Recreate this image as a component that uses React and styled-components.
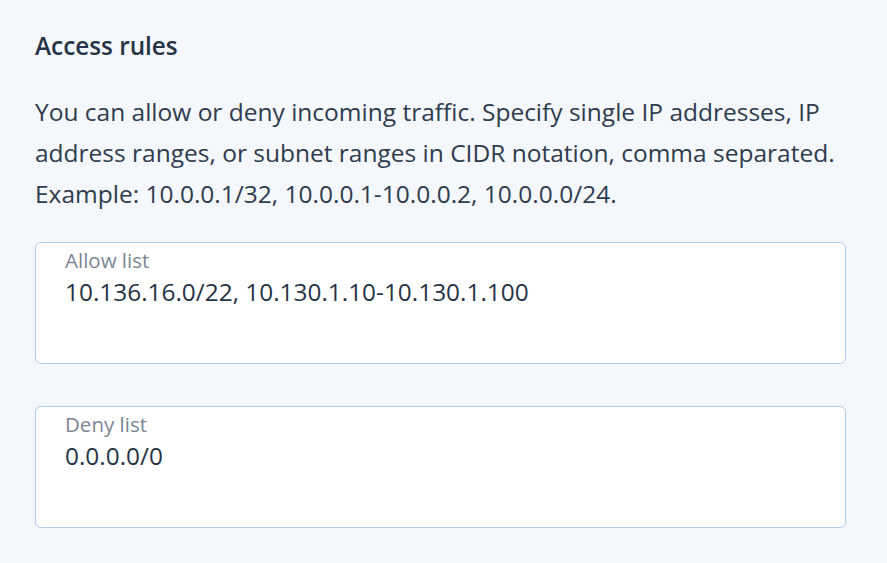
import styled, { createGlobalStyle } from 'styled-components';

const GlobalStyle = createGlobalStyle`
  html, body {
    margin: 0;
    padding: 0;
    background: #f4f7fb;
  }
  body {
    font-family: "Open Sans", "Noto Sans", sans-serif;
    color: #263446;
  }
`;

const Section = styled.section`
  padding: 26px 41px 0 35px;
  display: flex;
  flex-direction: column;
`;

const Title = styled.h2`
  margin: 0;
  font-size: 24.3px;
  font-weight: 550;
  line-height: 40px;
  color: #263446;
`;

const Description = styled.p`
  margin: 25px 0 0;
  font-size: 24.5px;
  line-height: 41px;
  color: #2f3c4e;
`;

const Fields = styled.div`
  display: flex;
  flex-direction: column;
  gap: 42px;
  margin-top: 28px;
`;

const Field = styled.label`
  display: flex;
  flex-direction: column;
  height: 122px;
  box-sizing: border-box;
  padding: 4px 29px 0;
  background: #ffffff;
  border: 1px solid #b0cbec;
  border-radius: 6px;
`;

const Label = styled.span`
  font-size: 20.5px;
  line-height: 26px;
  color: #7b8594;
`;

const Value = styled.textarea`
  flex: 1;
  border: none;
  outline: none;
  resize: none;
  padding: 0;
  margin: 0;
  background: transparent;
  font-family: inherit;
  font-size: 24.4px;
  line-height: 38px;
  color: #263446;
`;

const fields = [
  { label: 'Allow list', value: '10.136.16.0/22, 10.130.1.10-10.130.1.100' },
  { label: 'Deny list', value: '0.0.0.0/0' },
];

const App = () => (
  <>
    <GlobalStyle />
    <Section>
      <Title>Access rules</Title>
      <Description>
        You can allow or deny incoming traffic. Specify single IP addresses, IP
        address ranges, or subnet ranges in CIDR notation, comma separated.
        Example: 10.0.0.1/32, 10.0.0.1-10.0.0.2, 10.0.0.0/24.
      </Description>
      <Fields>
        {fields.map(f => (
          <Field key={f.label}>
            <Label>{f.label}</Label>
            <Value defaultValue={f.value} spellCheck={false} />
          </Field>
        ))}
      </Fields>
    </Section>
  </>
);

export default App;
